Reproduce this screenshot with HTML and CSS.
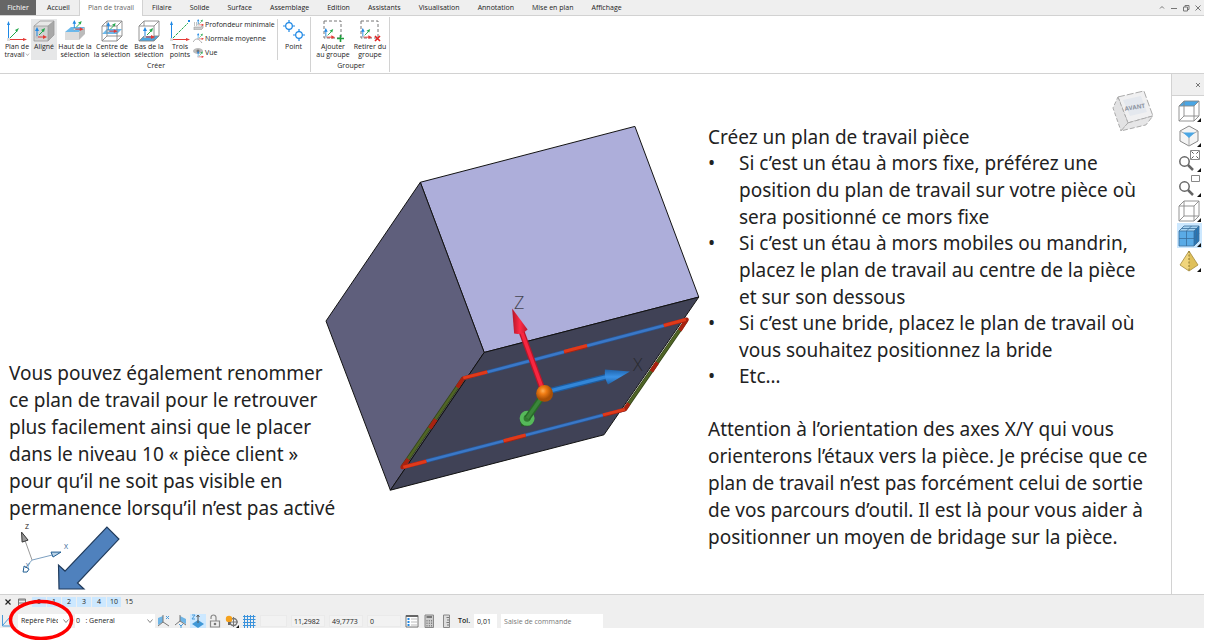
FILE: index.html
```html
<!DOCTYPE html>
<html lang="fr">
<head>
<meta charset="utf-8">
<title>Plan de travail</title>
<link rel="stylesheet" href="styles.css">
</head>
<body>
<svg class="defs" aria-hidden="true">
  <defs>
    <symbol id="axes" viewBox="0 0 12 12">
      <path d="M2 10V3" stroke="#1e88e5" fill="none"/><path d="M0 4l2-4 2 4z" fill="#1e88e5"/>
      <path d="M3 10h6" stroke="#e53935" fill="none"/><path d="M8 8l4 2-4 2z" fill="#e53935"/>
      <path d="M4 8l4-4" stroke="#22a84b" fill="none"/><path d="M6 3l4-2-1 4z" fill="#22a84b"/>
      <circle cx="2" cy="10" r="1" fill="#fff" stroke="#999" stroke-width=".6"/>
    </symbol>
    <symbol id="chevron" viewBox="0 0 8 8"><path d="M1.500 2.500l2.500 3 2.500-3" fill="none" stroke="#777" stroke-width=".9"/></symbol>
    <symbol id="wirecube" viewBox="0 0 22 22">
      <path d="M1 6h15v15H1zM6 1h15v15H6zM1 6l5-5M16 6l5-5M16 21l5-5M1 21l5-5" fill="none" stroke="#888" stroke-width=".9"/>
    </symbol>
    <symbol id="lens" viewBox="0 0 22 22">
      <circle cx="6.500" cy="11.500" r="4.700" fill="#fff" stroke="#666" stroke-width="1.500"/><path d="M10 15l5 5" stroke="#666" stroke-width="2.500"/>
    </symbol>
  </defs>
</svg>

<div class="app">
  <header class="tabs">
    <nav class="tab-list">
      <button class="tab tab-file">Fichier</button>
      <button class="tab">Accueil</button>
      <button class="tab tab-active">Plan de travail</button>
      <button class="tab">Filaire</button>
      <button class="tab">Solide</button>
      <button class="tab">Surface</button>
      <button class="tab">Assemblage</button>
      <button class="tab">Edition</button>
      <button class="tab">Assistants</button>
      <button class="tab">Visualisation</button>
      <button class="tab">Annotation</button>
      <button class="tab">Mise en plan</button>
      <button class="tab">Affichage</button>
    </nav>
    <div class="window-buttons">
      <button aria-label="Réduire le ruban"><svg viewBox="0 0 8 8"><path d="M2 4.500l2-2 2 2"/></svg></button>
      <button aria-label="Minimiser"><svg viewBox="0 0 8 8"><path d="M1 4.500h6"/></svg></button>
      <button aria-label="Restaurer"><svg viewBox="0 0 8 8"><path d="M1.500 3h4v4h-4zM3 3V1.500h4v4H5.500"/></svg></button>
      <button aria-label="Fermer"><svg viewBox="0 0 8 8"><path d="M1.500 1.500l5 5M6.500 1.500l-5 5"/></svg></button>
    </div>
  </header>

  <section class="ribbon">
    <div class="group">
      <div class="group-body">
        <button class="tool tool-s"><svg viewBox="0 0 22 22"><path d="M2.500 18V4" stroke="#1e88e5"/><path d="M1 5l1.500-4L4 5z" fill="#1e88e5"/><path d="M4 19.500h14" stroke="#e53935"/><path d="M17 18l4 1.500-4 1.500z" fill="#e53935"/><path d="M4 18l7-7" stroke="#22a84b"/><path d="M9 10l4-2-2 4z" fill="#22a84b"/><rect x="1" y="18" width="3" height="3" fill="#ddd"/></svg><span>Plan de<br>travail<svg class="mini-chevron"><use href="#chevron" width="5" height="5"/></svg></span></button>
        <button class="tool tool-xs tool-on"><svg viewBox="0 0 22 22"><path d="M1 6l6-5h14l-6 5z" fill="#e8e8e8"/><path d="M15 6l6-5v14l-6 6z" fill="#a8a8a8"/><path d="M1 6h14v15H1z" fill="#d2d2d2"/><path d="M1 6l6-5h14v14l-6 6H1zh14v15M15 6l6-5" fill="none" stroke="#999" stroke-width=".8"/><use href="#axes" x="2" y="7" width="12" height="12"/></svg><span>Aligné</span></button>
        <button class="tool tool-m"><svg viewBox="0 0 22 22"><path d="M1 12l6-5h14l-6 5z" fill="#6bb9ec"/><path d="M1 12h14v8H1z" fill="#ddd"/><path d="M15 12l6-5v7l-6 6z" fill="#bbb"/><use href="#axes" x="8" y="0" width="12" height="11"/></svg><span>Haut de la<br>sélection</span></button>
        <button class="tool tool-l"><svg viewBox="0 0 22 22"><path d="M1 14l5-5h15l-5 5z" fill="#6bb9ec"/><use href="#wirecube" width="22" height="22"/><use href="#axes" x="5" y="2" width="12" height="11"/></svg><span>Centre de<br>la sélection</span></button>
        <button class="tool tool-m"><svg viewBox="0 0 22 22"><path d="M1 21l5-5h15l-5 5z" fill="#4aa6e4"/><path d="M1 6h15v15H1zM6 6V1h15v15h-5M1 6l5-5M16 6l5-5M16 21l5-5M1 21l5-5" fill="none" stroke="#888" stroke-width=".9"/><use href="#axes" x="5" y="7" width="12" height="12"/></svg><span>Bas de la<br>sélection</span></button>
        <button class="tool tool-xs"><svg viewBox="0 0 22 22"><path d="M2.500 18V4" stroke="#1e88e5"/><path d="M1 5l1.500-4L4 5z" fill="#1e88e5"/><path d="M4 19.500h14" stroke="#e53935"/><path d="M17 18l4 1.500-4 1.500z" fill="#e53935"/><path d="M4 18L19 3" stroke="#22a84b" stroke-dasharray="3 1"/><path d="M19 0h2v2h-2z" fill="#1e88e5"/><rect x="1" y="18" width="3" height="3" fill="#ddd"/></svg><span>Trois<br>points</span></button>
        <div class="small-tools">
          <button><svg viewBox="0 0 11 11"><path d="M1 8h7l2-2v3L8 11H1z" fill="#ccc" stroke="#999" stroke-width=".6"/><path d="M1 4h5M1 6h4" stroke="#888" stroke-dasharray="1 1"/><use href="#axes" x="4" y="0" width="7" height="7"/></svg>Profondeur minimale</button>
          <button><svg viewBox="0 0 11 11"><path d="M0 9c3-5 6-3 9 1" fill="none" stroke="#aaa"/><use href="#axes" x="4" y="0" width="7" height="7"/></svg>Normale moyenne</button>
          <button><svg viewBox="0 0 11 11"><ellipse cx="5" cy="4" rx="5" ry="3" fill="#bbb"/><circle cx="5" cy="4" r="1.500" fill="#777"/><use href="#axes" x="4" y="4" width="7" height="7"/></svg>Vue</button>
        </div>
        <button class="tool tool-m tool-point"><svg viewBox="0 0 22 22"><g fill="none" stroke="#1e88e5" stroke-width="1.200"><circle cx="6" cy="6" r="3.300"/><path d="M6 0v3M6 9v3M0 6h3M9 6h3"/><circle cx="16" cy="15" r="3.300"/><path d="M16 9v3M16 18v3M10 15h3M19 15h3"/></g></svg><span>Point</span></button>
      </div>
      <h2 class="group-name">Créer</h2>
    </div>
    <div class="group">
      <div class="group-body">
        <button class="tool tool-l"><svg viewBox="0 0 22 22"><path d="M2 1h17v17H2z" fill="none" stroke="#777" stroke-dasharray="3 2"/><use href="#axes" x="2" y="8" width="11" height="11"/><path d="M15 18.500h7M18.500 15v7" stroke="#1e9e3e" stroke-width="1.600"/></svg><span>Ajouter<br>au groupe</span></button>
        <button class="tool tool-m"><svg viewBox="0 0 22 22"><path d="M2 1h17v17H2z" fill="none" stroke="#777" stroke-dasharray="3 2"/><use href="#axes" x="2" y="8" width="11" height="11"/><path d="M16 16l5 5M21 16l-5 5" stroke="#e32222" stroke-width="1.600"/></svg><span>Retirer du<br>groupe</span></button>
      </div>
      <h2 class="group-name">Grouper</h2>
    </div>
  </section>

  <main class="workspace">
    <div class="viewport">
      <svg class="scene" viewBox="0 0 1171 521" role="img" aria-label="Pièce avec son plan de travail">
        <defs>
          <linearGradient id="blueCone" x1="0" y1="0" x2="0" y2="1"><stop offset="0" stop-color="#1f63ab"/><stop offset=".5" stop-color="#3b93e8"/><stop offset="1" stop-color="#2163a8"/></linearGradient>
          <linearGradient id="redCone"><stop offset="0" stop-color="#b31528"/><stop offset=".5" stop-color="#ff2c45"/><stop offset="1" stop-color="#b81a2c"/></linearGradient>
          <radialGradient id="ball" cx=".4" cy=".35"><stop offset="0" stop-color="#ffb057"/><stop offset=".4" stop-color="#f07c13"/><stop offset="1" stop-color="#a84f05"/></radialGradient>
        </defs>
        <g transform="translate(0 -74)">
          <g stroke="#111" stroke-linejoin="round">
            <path d="M420 182.500L635 126.500L699 297.500L484 353z" fill="#adaeda"/>
            <path d="M420 182.500L484 353L390 491L325.500 321.500z" fill="#5f5f7c"/>
            <path d="M484 353L699 297.500L604 435.500L390 491z" fill="#404256"/>
          </g>
          <text class="axis-name" x="514" y="309">Z</text>
          <text class="axis-name" x="633" y="372">X</text>
          <g fill="none" stroke-width="4">
            <path d="M463 379L687 320M402 468L625 410" stroke="#2a5590"/>
            <path d="M463 379L687 320M402 468L625 410" stroke="#3a78c8" stroke-width="2.500"/>
            <path d="M463 379L402 468M687 320L625 410" stroke="#35451a"/>
            <path d="M463 379L402 468M687 320L625 410" stroke="#506526" stroke-width="2.400"/>
            <path d="M457 388L463 379L487 372.500M564 352.500L587 346.500M664 326L687 320L680 331M657.500 363L651.500 372M629 404L625 410L603 416M525.500 436L503.500 442M426 462L402 468L408 460M429.500 429L435.500 420" stroke="#a82210" stroke-linejoin="round"/>
            <path d="M463 378.500L487 372.500M564 352L587 346M664 326L686 320M625 410L603 415.500M525.500 435.700L503.500 441.500M426 462L403 468" stroke="#e03a1a" stroke-width="3"/>
          </g>
          <path d="M544 394L521 331" stroke="#b5182b" stroke-width="6"/><path d="M544 394L521 331" stroke="#f92640" stroke-width="3.500"/>
          <path d="M512 309L514 334Q521 336 527.500 330z" fill="url(#redCone)"/>
          <path d="M544 393L606 377.500" stroke="#1e5c9f" stroke-width="6"/><path d="M544 393L606 377.500" stroke="#3286d8" stroke-width="3.500"/>
          <path d="M630 372L605 370Q604 378 608 385z" fill="url(#blueCone)"/>
          <path d="M520 420l1 7 8 0 5-5z" fill="#245a24"/>
          <circle cx="527" cy="419" r="5.500" fill="#317a31" stroke="#56b95a" stroke-width="4"/>
          <path d="M543 396L527 419" stroke="#286a28" stroke-width="6.500"/><path d="M543 396L527 419" stroke="#3a873a" stroke-width="3.500"/>
          <circle cx="544.500" cy="394" r="8.500" fill="url(#ball)"/>

          <path d="M31 561L22 536" stroke="#999"/><path d="M20.500 533L21 543L27 541z" fill="#999" stroke="#333"/>
          <path d="M31 561L51 556" stroke="#7b9fc0"/><path d="M60 553L50 553L52 558z" fill="#b9d2e6" stroke="#1f5c92"/>
          <path d="M31 561L24 569" stroke="#7b9fc0"/><path d="M22 573l1-6 5 3-2 3z" fill="none" stroke="#1f5c92"/>
          <text class="triad-name" x="24" y="530">Z</text><text class="triad-name triad-blue" x="63" y="550">X</text><text class="triad-name triad-blue" x="25" y="569">Y</text>

          <path d="M58 590L57.500 566L64 572L106 528L118 540L76.500 584L83 590z" fill="#4f81bd" stroke="#203b5c" stroke-width="1.200"/>

          <g stroke="#aaa" stroke-linejoin="round">
            <path d="M1119 97L1145 91L1154 116L1129 123z" fill="#f0f0f1" stroke-dasharray="7 2"/>
            <path d="M1119 97L1129 123L1122 131L1114 108z" fill="#e2e2e3" stroke-dasharray="4 2"/>
            <path d="M1129 123L1154 116L1147 125L1122 131z" fill="#e6e6e7" stroke-dasharray="5 2"/>
          </g>
          <path d="M1124 100L1142 96L1148 112L1131 116z" fill="#e4e8ee"/>
          <text class="cube-name" x="1126" y="111" transform="rotate(-9 1126 111)">AVANT</text>
        </g>
      </svg>
      <div class="note note-left">
        <p>Vous pouvez également renommer<br>ce plan de travail pour le retrouver<br>plus facilement ainsi que le placer<br>dans le niveau 10 « pièce client »<br>pour qu’il ne soit pas visible en<br>permanence lorsqu’il n’est pas activé</p>
      </div>
      <div class="note note-right">
        <p>Créez un plan de travail pièce</p>
        <ul>
          <li>Si c’est un étau à mors fixe, préférez une<br>position du plan de travail sur votre pièce où<br>sera positionné ce mors fixe</li>
          <li>Si c’est un étau à mors mobiles ou mandrin,<br>placez le plan de travail au centre de la pièce<br>et sur son dessous</li>
          <li>Si c’est une bride, placez le plan de travail où<br>vous souhaitez positionnez la bride</li>
          <li>Etc…</li>
        </ul>
        <p>Attention à l’orientation des axes X/Y qui vous<br>orienterons l’étaux vers la pièce. Je précise que ce<br>plan de travail n’est pas forcément celui de sortie<br>de vos parcours d’outil. Il est là pour vous aider à<br>positionner un moyen de bridage sur la pièce.</p>
      </div>
    </div>
    <aside class="side">
      <div class="side-head"><button aria-label="Fermer le panneau"><svg viewBox="0 0 8 8"><path d="M2 2l4 4M6 2l-4 4"/></svg></button></div>
      <div class="side-tools">
        <button aria-label="Vue de dessus"><svg viewBox="0 0 22 22"><path d="M1 6l5-5h15l-5 5z" fill="#4aa6e4"/><use href="#wirecube" width="22" height="22"/></svg></button>
        <button aria-label="Vue isométrique"><svg viewBox="0 0 22 22"><path d="M11 1l9 5v10l-9 5-9-5V6z" fill="#f4f4f4" stroke="#888"/><path d="M2 6l9 5 9-5M11 11v10" fill="none" stroke="#aaa"/><path d="M5 7.500h12L11 13z" fill="#4aa6e4"/></svg></button>
        <button aria-label="Zoom tout"><svg viewBox="0 0 22 22"><use href="#lens" width="22" height="22"/><path d="M12.500 .5h9v9h-9z" fill="#fff" stroke="#888"/><path d="M13.500 1.500l7 7M20.500 1.500l-7 7" stroke="#555" stroke-dasharray="3 3.900"/></svg></button>
        <button aria-label="Zoom fenêtre"><svg viewBox="0 0 22 22"><use href="#lens" width="22" height="22"/><path d="M13.500 .5h8v6h-8z" fill="#fff" stroke="#888"/></svg></button>
        <button aria-label="Filaire"><svg viewBox="0 0 22 22"><use href="#wirecube" width="22" height="22"/></svg></button>
        <button class="side-on" aria-label="Ombré"><svg viewBox="0 0 22 22"><path d="M1 6l5-5h15l-5 5z" fill="#a8d4f2"/><path d="M1 6h15v15H1z" fill="#5aabe6"/><path d="M16 6l5-5v15l-5 5z" fill="#2876b5"/><path d="M1 6h15v15H1zM1 6l5-5h15v15l-5 5M16 6l5-5M8.500 6v15M1 13.500h15l5-5M8.500 6l5-5M3.500 3.500h15v15" fill="none" stroke="#3a6f9c" stroke-width=".8"/></svg></button>
        <button aria-label="Pyramide"><svg viewBox="0 0 22 22"><path d="M11 1L2 15l9 6z" fill="#f0d57c"/><path d="M11 1l9 14-9 6z" fill="#dfc05a"/><path d="M11 1L2 15l9 6 9-6z" fill="none" stroke="#a58a3c" stroke-width=".8"/><path d="M11 1v20" stroke="#8b742e" stroke-dasharray="2 1.500"/></svg></button>
      </div>
    </aside>
  </main>

  <footer class="status">
    <div class="levels">
      <button class="level-icon" aria-label="Fermer"><svg viewBox="0 0 8 8"><path d="M1.500 1.500l5 5M6.500 1.500l-5 5" stroke="#222" stroke-width="1.200"/></svg></button>
      <button class="level-icon" aria-label="Niveaux"><svg viewBox="0 0 8 8"><path d="M.5 1h7v6.500h-7zM0 2h8M1 5h6" fill="none" stroke="#777"/></svg></button>
      <div class="chips">
        <button class="chip">0</button><button class="chip">1</button><button class="chip">2</button><button class="chip">3</button><button class="chip">4</button><button class="chip">10</button><button class="chip chip-off">15</button>
      </div>
    </div>
    <div class="fields">
      <svg class="plane-icon" viewBox="0 0 12 14"><path d="M2.500 1v11H11" fill="none" stroke="#4a9ad8"/><path d="M3 11l7-8" stroke="#4a9ad8"/></svg>
      <label class="pick pick-plane"><select aria-label="Plan de travail"><option>Repère Pièce</option></select><svg><use href="#chevron"/></svg></label>
      <label class="pick pick-level"><select aria-label="Niveau"><option>0&nbsp;&nbsp; : General</option></select><svg><use href="#chevron"/></svg></label>
      <div class="modes">
        <button aria-label="Plan X"><svg viewBox="0 0 14 14"><path d="M1 4l5-2v6l-5 3z" fill="#6fb5e6"/><path d="M6 8V1M6 8l6 4M6 8l-5 4" fill="none" stroke="#777"/><path d="M9 2l3 3M12 2L9 5" stroke="#4a9ad8"/></svg></button>
        <button aria-label="Plan Y"><svg viewBox="0 0 14 14"><path d="M6 2l6 3v5L6 7z" fill="#6fb5e6"/><path d="M6 7V1M6 7l6 4M6 7l-5 4" fill="none" stroke="#777"/><path d="M5 10l2 2 2-2M7 12v2" fill="none" stroke="#4a9ad8"/></svg></button>
        <button class="mode-on" aria-label="Plan Z"><svg viewBox="0 0 14 14"><path d="M7 6l6 4-6 4-6-4z" fill="#4098d7"/><path d="M7 9V1M5.500 3L7 1l1.500 2" fill="none" stroke="#555"/><path d="M1 1h3L1 5h3" fill="none" stroke="#4a9ad8"/></svg></button>
        <button aria-label="Verrou"><svg viewBox="0 0 14 14"><path d="M2.500 7h9v6h-9zM8 7V3.500a2.500 2.500 0 0 0-5 0V5" fill="none" stroke="#888" stroke-width="1.200"/><circle cx="7" cy="10" r="1.300" fill="#777"/></svg></button>
        <button aria-label="Options"><svg viewBox="0 0 14 14"><circle cx="8.500" cy="8" r="3.500" fill="none" stroke="#777" stroke-width="1.400"/><path d="M8.500 3v10M4 8h9" stroke="#777"/><circle cx="4" cy="5" r="3.200" fill="#f5a11c"/><path d="M3 8h2.500v3H3z" fill="#666"/><path d="M14 11v3h-3z" fill="#111"/></svg></button>
        <button aria-label="Grille"><svg viewBox="0 0 14 14"><path d="M2.500 1v13M5.500 1v13M8.500 1v13M11.500 1v13M1 2.500h12.500M1 5.500h12.500M1 8.500h12.500M1 11.500h12.500" stroke="#3b93dc"/></svg></button>
      </div>
      <div class="coords">
        <output class="coord-short"></output><output>11,2982</output><output>49,7773</output><output>0</output>
      </div>
      <div class="modes modes-end">
        <button aria-label="Liste"><svg viewBox="0 0 14 14"><path d="M1 1.500h12V13H1z" fill="#fff" stroke="#777"/><path d="M1 2h12" stroke="#666" stroke-width="2"/><path d="M2.500 5h2M2.500 8h2M2.500 11h2" stroke="#1e88e5" stroke-width="2"/><path d="M6 5h6M6 8h6M6 11h6" stroke="#bbb"/></svg></button>
        <button aria-label="Calculatrice"><svg viewBox="0 0 14 14"><path d="M3 1h8.500v12.500H3z" fill="#ccc" stroke="#888"/><path d="M4.500 3h5.500" stroke="#777" stroke-width="2"/><path d="M5 6v7M7.300 6v7M9.600 6v7" stroke="#777" stroke-dasharray="1.500 1"/></svg></button>
        <button aria-label="Règle"><svg viewBox="0 0 14 14"><path d="M4.500 1h6v12.500h-6z" fill="#ddd" stroke="#888"/><path d="M7.500 3.500H10M8 6h2M7.500 8.500H10M8 11h2" stroke="#777"/></svg></button>
      </div>
      <label class="tolerance">Tol. <input value="0,01"></label>
      <input class="command" placeholder="Saisie de commande" aria-label="Saisie de commande">
      <svg class="callout" viewBox="0 0 66 42"><ellipse cx="33" cy="21" rx="30.500" ry="18.500" fill="none" stroke="#f00" stroke-width="3.500"/></svg>
    </div>
  </footer>
</div>
</body>
</html>
```
FILE: styles.css
```css
* { box-sizing: border-box; }

body {
  margin: 0;
  background: #fff;
  color: #222;
  font: 7px/8px "Open Sans", "Noto Sans", sans-serif;
}

button, input, select, output {
  font: inherit;
  color: inherit;
  border: 0;
  padding: 0;
  margin: 0;
  background: none;
}

svg { display: block; flex: none; }
.defs { position: absolute; width: 0; height: 0; }

.app {
  display: flex;
  flex-direction: column;
  min-height: 100vh;
  padding: 0 9px 12px 0;
}

/* Tabs */
.tabs {
  display: flex;
  justify-content: space-between;
  background: #efefef;
  border-bottom: 1px solid #d2d2d2;
}
.tab-list { display: flex; height: 15px; }
.tab { padding: 0 9px; white-space: nowrap; font-weight: 500; }
.tab-file { width: 36px; padding: 0; margin-right: 2px; background: #666; color: #fff; }
.tab-active {
  height: 16px;
  padding: 0 8px;
  background: #fff;
  color: #666;
  border: 1px solid #d2d2d2;
  border-width: 0 1px;
}
.window-buttons { display: flex; align-items: center; gap: 4px; padding-right: 2px; }
.window-buttons svg, .side-head svg { width: 8px; height: 8px; fill: none; stroke: #777; }

/* Ribbon */
.ribbon { display: flex; height: 58px; border-bottom: 1px solid #d2d2d2; }
.group {
  display: flex;
  flex-direction: column;
  justify-content: space-between;
  margin: 1px 0;
  padding: 2px 1px 2px 3px;
  border-right: 1px solid #d2d2d2;
}
.group-body { display: flex; }
.group-name { margin: 0; font-size: 7px; line-height: 8px; font-weight: 500; text-align: center; }
.tool {
  display: flex;
  flex-direction: column;
  align-items: center;
  height: 41px;
  padding-top: 1px;
  gap: 1px;
  white-space: nowrap;
  font-weight: 500;
}
.tool > svg { width: 22px; height: 22px; }
.tool-xs { width: 26px; }
.tool-s { width: 28px; }
.tool-m { width: 36px; }
.tool-l { width: 38px; }
.tool-on { background: #e6e7e8; }
.tool-point { width: 32px; border-left: 1px solid #d2d2d2; }
.mini-chevron { display: inline-block; width: 5px; height: 5px; }
.small-tools { display: flex; flex-direction: column; gap: 3px; width: 84px; }
.small-tools button { display: flex; align-items: center; gap: 1px; white-space: nowrap; font-weight: 500; }
.small-tools svg { width: 11px; height: 11px; }

/* Workspace */
.workspace { display: flex; flex: 1; }
.viewport {
  position: relative;
  flex: 1;
  display: flex;
  justify-content: space-between;
  align-items: flex-start;
}
.scene { position: absolute; inset: 0; width: 100%; height: 100%; }
.axis-name { font: 300 18px "Open Sans", sans-serif; fill: #222; opacity: .75; }
.triad-name { font: 7px "Open Sans", sans-serif; fill: #222; }
.triad-blue { fill: #1f5c92; }
.cube-name { font: 700 6px "Open Sans", sans-serif; fill: #8b929e; }

.note {
  position: relative;
  color: #222;
  font: 19px/27px "Noto Sans", sans-serif;
  white-space: nowrap;
}
.note p, .note ul { margin: 0; }
.note-left { padding-left: 9px; align-self: flex-end; margin-bottom: 72px; }
.note-right { width: 463px; padding-top: 50px; }
.note ul { padding-left: 31px; margin-bottom: 26px; }
.note li { margin-top: -1px; list-style: none; }
.note li::before { content: "•"; float: left; margin-left: -31px; }

/* Side panel */
.side { width: 33px; border-left: 1px solid #d2d2d2; background: #fff; }
.side-head {
  display: flex;
  justify-content: flex-end;
  align-items: center;
  height: 22px;
  padding-right: 2px;
  background: #efefef;
  border-bottom: 1px solid #d2d2d2;
}
.side-tools { display: flex; flex-direction: column; align-items: center; padding: 2px 0 0 2px; }
.side-tools button {
  position: relative;
  display: grid;
  place-items: center;
  width: 25px;
  height: 25px;
}
.side-tools svg { width: 22px; height: 22px; }
.side-tools button::after {
  content: "";
  position: absolute;
  right: 1px;
  bottom: 1px;
  border: 2px solid #111;
  border-top-color: transparent;
  border-left-color: transparent;
}
.side-tools .side-on { background: #cce8ff; }

/* Status bar */
.status { height: 34px; background: #efefef; border-top: 1px solid #d2d2d2; }
.levels { display: flex; align-items: center; height: 14px; padding-left: 4px; gap: 6px; }
.level-icon svg { width: 8px; height: 8px; }
.chips { display: flex; gap: 1px; }
.chip { width: 14px; height: 10px; background: #cce8ff; }
.chip-off { background: none; }
.fields { position: relative; display: flex; align-items: center; height: 14px; margin-top: 5px; }
.plane-icon { width: 12px; height: 14px; margin-right: 6px; }
.pick { position: relative; height: 14px; background: #fff; }
.pick svg { position: absolute; right: 1px; top: 3px; width: 8px; height: 8px; pointer-events: none; }
.pick select { appearance: none; width: 100%; height: 14px; padding: 0 13px 0 3px; }
.pick-plane { width: 53px; margin-right: 4px; }
.pick-level { width: 80px; }
.pick-level select { padding-left: 1px; }
.modes { display: flex; gap: 1px; padding: 0 2px 0 1px; }
.modes button { display: grid; place-items: center; width: 16px; height: 14px; }
.modes svg { width: 14px; height: 14px; }
.modes .mode-on { background: #cce8ff; }
.coords { display: flex; gap: 4px; padding-left: 1px; }
.coords output { width: 34px; height: 12px; padding: 2px; background: #f2f2f2; border: 1px solid #eaeaea; line-height: 7px; }
.coords .coord-short { width: 27px; }
.modes-end { padding: 0 4px 0 3px; }
.tolerance { display: flex; align-items: center; gap: 4px; font-weight: 600; }
.tolerance input { width: 23px; height: 14px; padding-left: 3px; background: #fff; font-weight: 400; }
.command { width: 102px; height: 14px; margin-left: 4px; padding-left: 3px; background: #fff; }
.command::placeholder { color: #777; opacity: 1; }
.callout { position: absolute; left: 8px; top: -15px; width: 66px; height: 42px; }
```
